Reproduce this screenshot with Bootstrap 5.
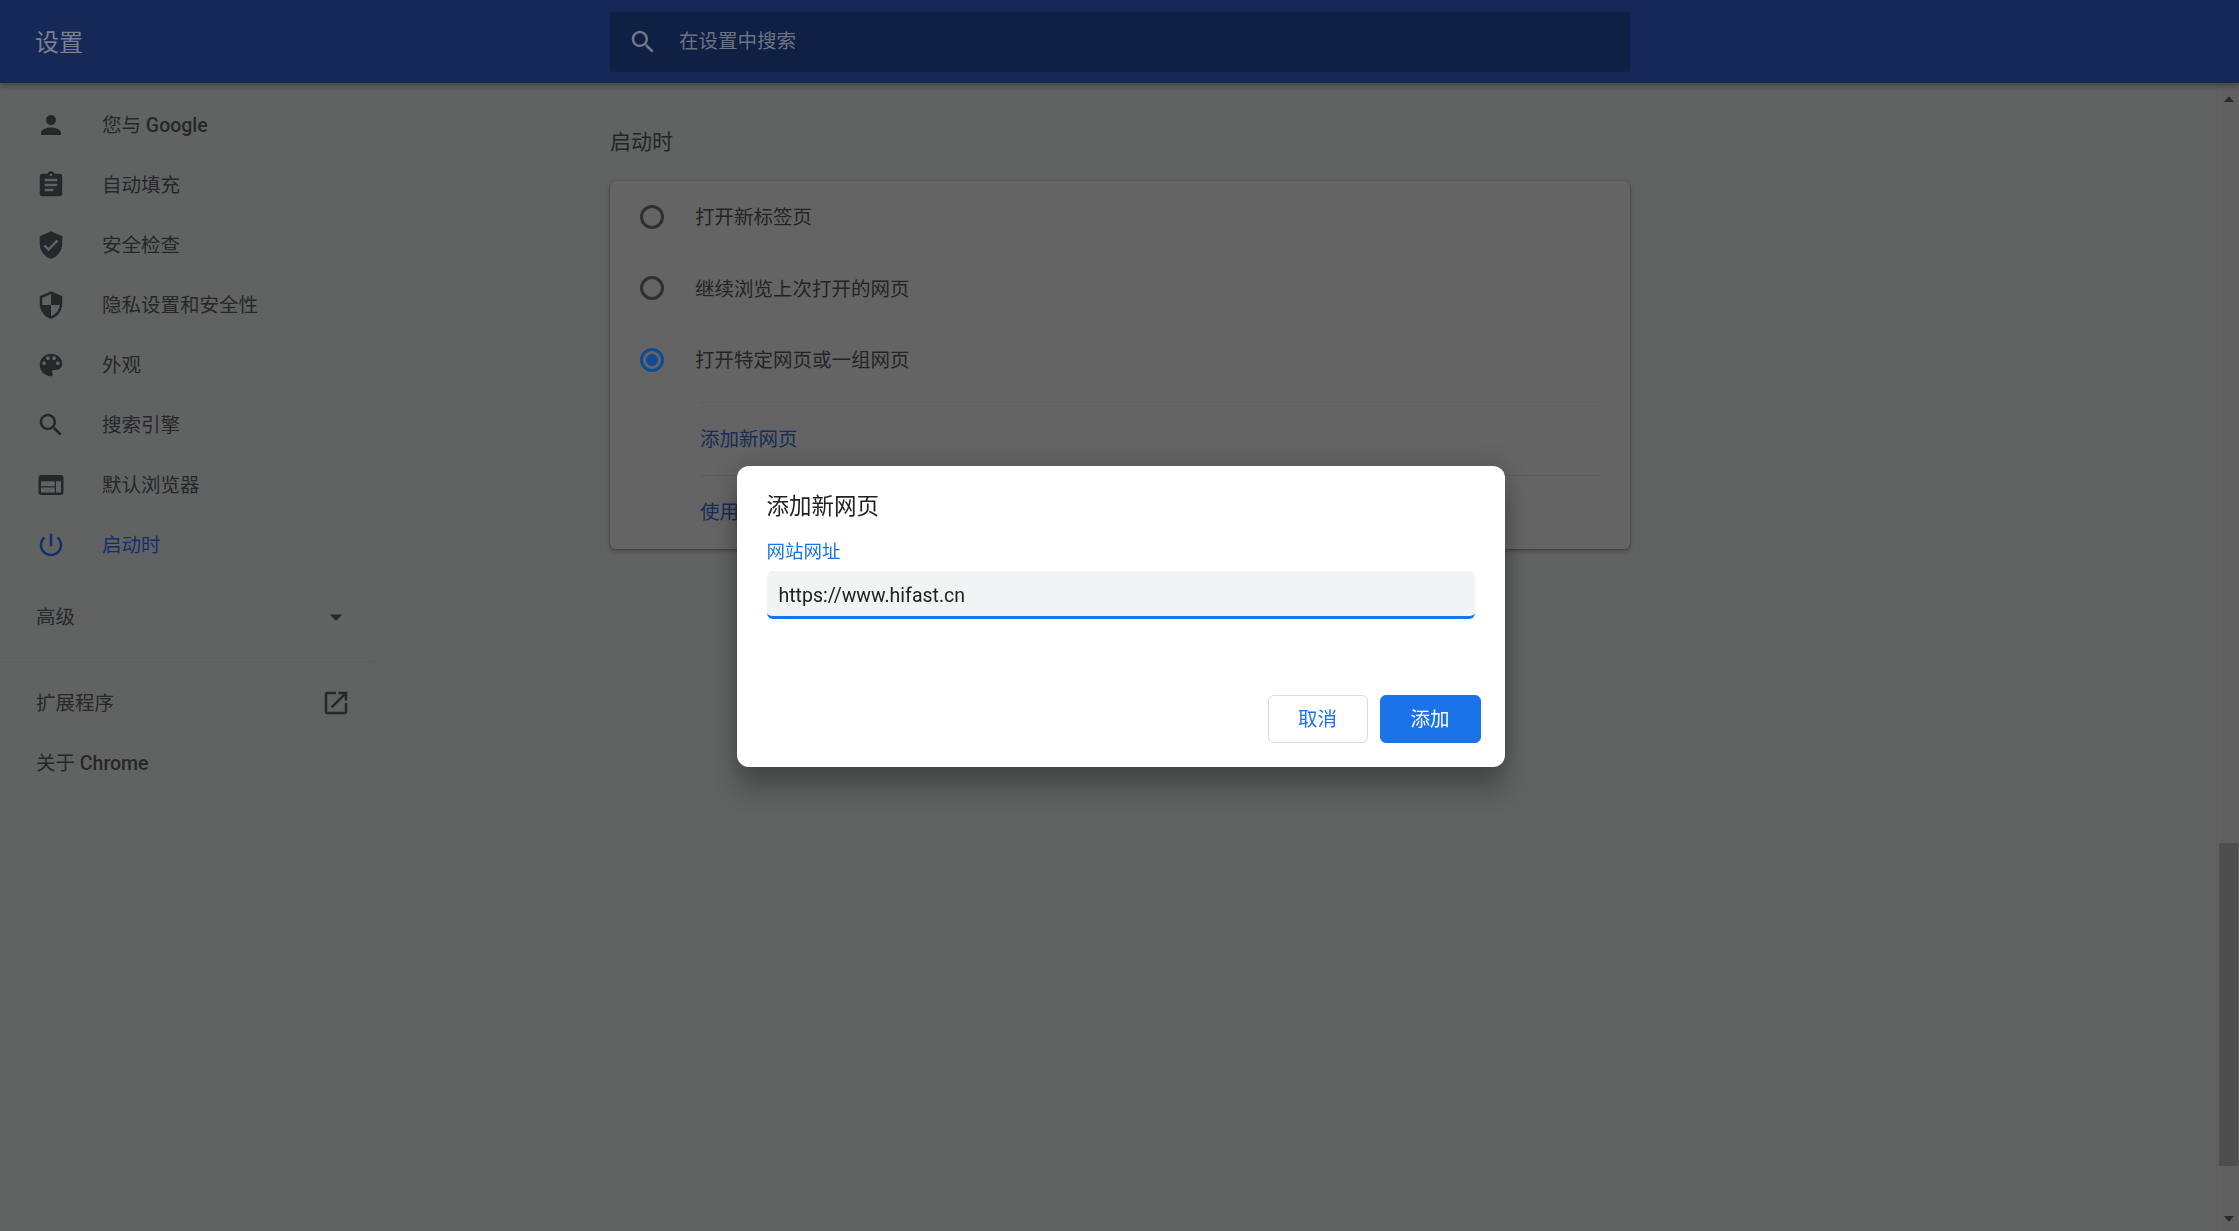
<!DOCTYPE html>
<html lang="zh-CN">
<head>
  <meta charset="UTF-8" />
  <meta name="viewport" content="width=device-width, initial-scale=1" />
  <title>设置</title>
  <link href="https://cdn.jsdelivr.net/npm/bootstrap@5.3.3/dist/css/bootstrap.min.css" rel="stylesheet" />
  <style>
    html, body { height: 100%; overflow: hidden; }
    body { background: #616362; color: #26272a; font-family: Roboto, "Noto Sans CJK SC", sans-serif; font-size: 19.5px; }
    svg { fill: currentColor; flex-shrink: 0; }
    .page-wrap { height: 1231px; }
    .top-bar { height: 83px; background: #152858; box-shadow: 0 3px 6px rgba(0,0,0,.3); position: relative; z-index: 2; }
    .top-title { width: 610px; padding: 2px 0 0 35px; font-size: 24px; color: #7b808c; }
    .search-box { width: 1020px; height: 60px; background: #102045; border-radius: 4px; padding-left: 18px; color: #6f7686; }
    .search-box input { background: transparent; border: 0; padding: 0; margin-left: 21px; font-size: 19.5px; box-shadow: none; }
    .search-box input::placeholder { color: #6b7282; opacity: 1; }
    .body-area { height: 1148px; }
    .side-menu { width: 375px; padding-top: 12px; }
    .side-link { height: 60px; padding: 0 0 0 36px; color: #26272a; gap: 36px; }
    .side-link > span, .side-row > span { padding-top: 2px; }
    .side-link.is-active { color: #142f6e; }
    .side-row { height: 60px; padding: 0 24px 0 36px; color: #26272a; }
    .side-adv { margin-top: 12px; }
    .side-adv svg { margin-top: -1px; }
    .side-line { border-top: 1px solid #5a5c5b; margin: 14px 0 11px; }
    .latin { font-weight: 500; }
    .main-area { width: 1020px; margin-left: 235px; padding-top: 41px; }
    .section-title { font-size: 21px; line-height: 34px; padding-top: 1px; color: #242527; margin-bottom: 22px; }
    .start-card { background: #646464; border: 0; border-radius: 6px; box-shadow: 0 1px 3px rgba(0,0,0,.35), 0 2px 6px rgba(0,0,0,.15); height: 368px; color: #232426; overflow: hidden; }
    .radio-row { height: 72px; padding-left: 30px; gap: 31px; }
    .radio-row > span:last-child { padding-top: 2px; }
    .radio-dot { width: 24px; height: 24px; border: 3px solid #2f3032; border-radius: 50%; }
    .radio-dot.is-on { border-color: #0f4a94; position: relative; }
    .radio-dot.is-on::after { content: ""; position: absolute; inset: 3px; background: #0f4a94; border-radius: 50%; }
    .link-row { margin: 0 30px 0 90px; height: 74px; border-top: 1px solid #5d5d5d; color: #172c58; }
    .link-first { margin-top: 6px; }
    .scroll-rail { width: 23px; background: #606060; border-left: 1px solid #5d5e5d; position: relative; }
    .scroll-thumb { position: absolute; left: 2px; right: 1px; top: 760px; height: 323px; background: #4e4e4e; }
    .scroll-up, .scroll-down { position: absolute; left: 7px; width: 0; height: 0; border-left: 5px solid transparent; border-right: 5px solid transparent; }
    .scroll-up { top: 13px; border-bottom: 6px solid #2a2a2a; }
    .scroll-down { bottom: 9px; border-top: 6px solid #2a2a2a; }
    .dlg-layer { position: fixed; inset: 0; z-index: 5; padding: 2px 0 0 2px; }
    .dlg-box { width: 768px; height: 301px; border: 0; border-radius: 12px; background: #fff; box-shadow: 0 0 24px rgba(0,0,0,.18), 0 24px 24px rgba(0,0,0,.24); color: #202124; }
    .dlg-head { padding: 25px 30px 0; border: 0; font-size: 22.5px; line-height: 30px; }
    .dlg-body { padding: 22px 30px 0; flex: none; }
    .dlg-label { font-size: 18.5px; line-height: 18px; color: #1a73e8; margin-bottom: 10px; display: block; }
    .dlg-input { height: 48px; background: #f1f3f4; border: 0; border-bottom: 3px solid #1a73e8; border-radius: 6px; padding: 4px 12px 0; font-size: 19.5px; color: #202124; box-shadow: none; }
    .dlg-input:focus { background: #f1f3f4; border-color: #1a73e8; box-shadow: none; }
    .dlg-foot { padding: 0 24px 24px; border: 0; margin-top: auto; gap: 12px; }
    .dlg-foot .btn { height: 48px; margin: 0; font-size: 19.5px; border-radius: 6px; padding: 2px 0 0; }
    .btn-no { width: 100px; background: #fff; border: 1px solid #dadce0; color: #1a73e8; }
    .btn-yes { width: 101px; background: #1a73e8; border: 1px solid #1a73e8; color: #fff; }
  </style>
</head>
<body>
  <div class="page-wrap d-flex flex-column">
    <header class="top-bar d-flex align-items-center">
      <div class="top-title">设置</div>
      <div class="search-box d-flex align-items-center">
        <svg width="30" height="30" viewBox="0 0 24 24"><path d="M15.5 14h-.79l-.28-.27C15.41 12.59 16 11.11 16 9.5 16 5.91 13.09 3 9.5 3S3 5.91 3 9.5 5.91 16 9.5 16c1.61 0 3.09-.59 4.23-1.57l.27.28v.79l5 4.99L20.49 19l-4.99-5zm-6 0C7.01 14 5 11.99 5 9.5S7.01 5 9.5 5 14 7.01 14 9.5 11.99 14 9.5 14z"/></svg>
        <input type="text" class="form-control" placeholder="在设置中搜索" />
      </div>
    </header>

    <div class="body-area d-flex">
      <nav class="side-menu nav flex-column flex-shrink-0">
        <a class="side-link nav-link d-flex align-items-center" href="#"><svg width="30" height="30" viewBox="0 0 24 24"><path d="M12 12c2.21 0 4-1.79 4-4s-1.79-4-4-4-4 1.79-4 4 1.79 4 4 4zm0 2c-2.67 0-8 1.34-8 4v2h16v-2c0-2.66-5.33-4-8-4z"/></svg><span>您与 <span class="latin">Google</span></span></a>
        <a class="side-link nav-link d-flex align-items-center" href="#"><svg width="30" height="30" viewBox="0 0 24 24"><path d="M19 3h-4.18C14.4 1.84 13.3 1 12 1c-1.3 0-2.4.84-2.82 2H5c-1.1 0-2 .9-2 2v14c0 1.1.9 2 2 2h14c1.1 0 2-.9 2-2V5c0-1.1-.9-2-2-2zm-7 0c.55 0 1 .45 1 1s-.45 1-1 1-1-.45-1-1 .45-1 1-1zm2 14H7v-2h7v2zm3-4H7v-2h10v2zm0-4H7V7h10v2z"/></svg><span>自动填充</span></a>
        <a class="side-link nav-link d-flex align-items-center" href="#"><svg width="30" height="30" viewBox="0 0 24 24"><path d="M12 1L3 5v6c0 5.55 3.84 10.74 9 12 5.16-1.26 9-6.45 9-12V5l-9-4zm-2 16l-4-4 1.41-1.41L10 14.17l6.59-6.59L18 9l-8 8z"/></svg><span>安全检查</span></a>
        <a class="side-link nav-link d-flex align-items-center" href="#"><svg width="30" height="30" viewBox="0 0 24 24"><path d="M12 1L3 5v6c0 5.55 3.84 10.74 9 12 5.16-1.26 9-6.45 9-12V5l-9-4zm0 10.99h7c-.53 4.12-3.28 7.79-7 8.94V12H5V6.3l7-3.11v8.8z"/></svg><span>隐私设置和安全性</span></a>
        <a class="side-link nav-link d-flex align-items-center" href="#"><svg width="30" height="30" viewBox="0 0 24 24"><path d="M12 3c-4.97 0-9 4.03-9 9s4.03 9 9 9c.83 0 1.5-.67 1.5-1.5 0-.39-.15-.74-.39-1.01-.23-.26-.38-.61-.38-.99 0-.83.67-1.5 1.5-1.5H16c2.76 0 5-2.24 5-5 0-4.42-4.03-8-9-8zm-5.5 9c-.83 0-1.5-.67-1.5-1.5S5.67 9 6.5 9 8 9.67 8 10.5 7.33 12 6.5 12zm3-4C8.67 8 8 7.33 8 6.5S8.67 5 9.5 5s1.5.67 1.5 1.5S10.33 8 9.5 8zm5 0c-.83 0-1.5-.67-1.5-1.5S13.67 5 14.5 5s1.5.67 1.5 1.5S15.33 8 14.5 8zm3 4c-.83 0-1.5-.67-1.5-1.5S16.67 9 17.5 9s1.5.67 1.5 1.5-.67 1.5-1.5 1.5z"/></svg><span>外观</span></a>
        <a class="side-link nav-link d-flex align-items-center" href="#"><svg width="30" height="30" viewBox="0 0 24 24"><path d="M15.5 14h-.79l-.28-.27C15.41 12.59 16 11.11 16 9.5 16 5.91 13.09 3 9.5 3S3 5.91 3 9.5 5.91 16 9.5 16c1.61 0 3.09-.59 4.23-1.57l.27.28v.79l5 4.99L20.49 19l-4.99-5zm-6 0C7.01 14 5 11.99 5 9.5S7.01 5 9.5 5 14 7.01 14 9.5 11.99 14 9.5 14z"/></svg><span>搜索引擎</span></a>
        <a class="side-link nav-link d-flex align-items-center" href="#"><svg width="30" height="30" viewBox="0 0 24 24"><path d="M20 4H4c-1.1 0-1.99.9-1.99 2L2 18c0 1.1.9 2 2 2h16c1.1 0 2-.9 2-2V6c0-1.1-.9-2-2-2zm-5 14H4v-4h11v4zm0-5H4V9h11v4zm5 5h-4V9h4v9z"/></svg><span>默认浏览器</span></a>
        <a class="side-link is-active nav-link d-flex align-items-center" href="#"><svg width="30" height="30" viewBox="0 0 24 24"><path d="M13 3h-2v10h2V3zm4.83 2.17l-1.42 1.42C17.99 7.86 19 9.81 19 12c0 3.87-3.13 7-7 7s-7-3.13-7-7c0-2.19 1.01-4.14 2.58-5.42L6.17 5.17C4.23 6.82 3 9.26 3 12c0 4.97 4.03 9 9 9s9-4.03 9-9c0-2.74-1.23-5.18-3.17-6.83z"/></svg><span>启动时</span></a>
        <div class="side-row side-adv d-flex align-items-center justify-content-between"><span>高级</span><svg width="30" height="30" viewBox="0 0 24 24"><path d="M7 10l5 5 5-5z"/></svg></div>
        <div class="side-line"></div>
        <div class="side-row d-flex align-items-center justify-content-between"><span>扩展程序</span><svg width="30" height="30" viewBox="0 0 24 24"><path d="M19 19H5V5h7V3H5c-1.11 0-2 .9-2 2v14c0 1.1.89 2 2 2h14c1.1 0 2-.9 2-2v-7h-2v7zM14 3v2h3.59l-9.83 9.83 1.41 1.41L19 6.41V10h2V3h-7z"/></svg></div>
        <div class="side-row d-flex align-items-center"><span>关于 <span class="latin">Chrome</span></span></div>
      </nav>

      <main class="main-area flex-shrink-0">
        <div class="section-title">启动时</div>
        <div class="start-card card">
          <div class="radio-row d-flex align-items-center"><span class="radio-dot"></span><span>打开新标签页</span></div>
          <div class="radio-row d-flex align-items-center"><span class="radio-dot"></span><span>继续浏览上次打开的网页</span></div>
          <div class="radio-row d-flex align-items-center"><span class="radio-dot is-on"></span><span>打开特定网页或一组网页</span></div>
          <div class="link-row link-first d-flex align-items-center">添加新网页</div>
          <div class="link-row d-flex align-items-center">使用当前网页</div>
        </div>
      </main>

      <div class="flex-grow-1"></div>
      <div class="scroll-rail flex-shrink-0">
        <span class="scroll-up"></span>
        <span class="scroll-thumb"></span>
        <span class="scroll-down"></span>
      </div>
    </div>
  </div>

  <div class="dlg-layer d-flex align-items-center justify-content-center">
    <div class="dlg-box modal-content d-flex flex-column">
      <div class="dlg-head modal-header">添加新网页</div>
      <div class="dlg-body modal-body">
        <label class="dlg-label" for="siteUrl">网站网址</label>
        <input type="text" id="siteUrl" class="dlg-input form-control" value="https://www.hifast.cn" />
      </div>
      <div class="dlg-foot modal-footer">
        <button type="button" class="btn btn-no">取消</button>
        <button type="button" class="btn btn-yes">添加</button>
      </div>
    </div>
  </div>

  <script src="https://cdn.jsdelivr.net/npm/bootstrap@5.3.3/dist/js/bootstrap.bundle.min.js"></script>
</body>
</html>
